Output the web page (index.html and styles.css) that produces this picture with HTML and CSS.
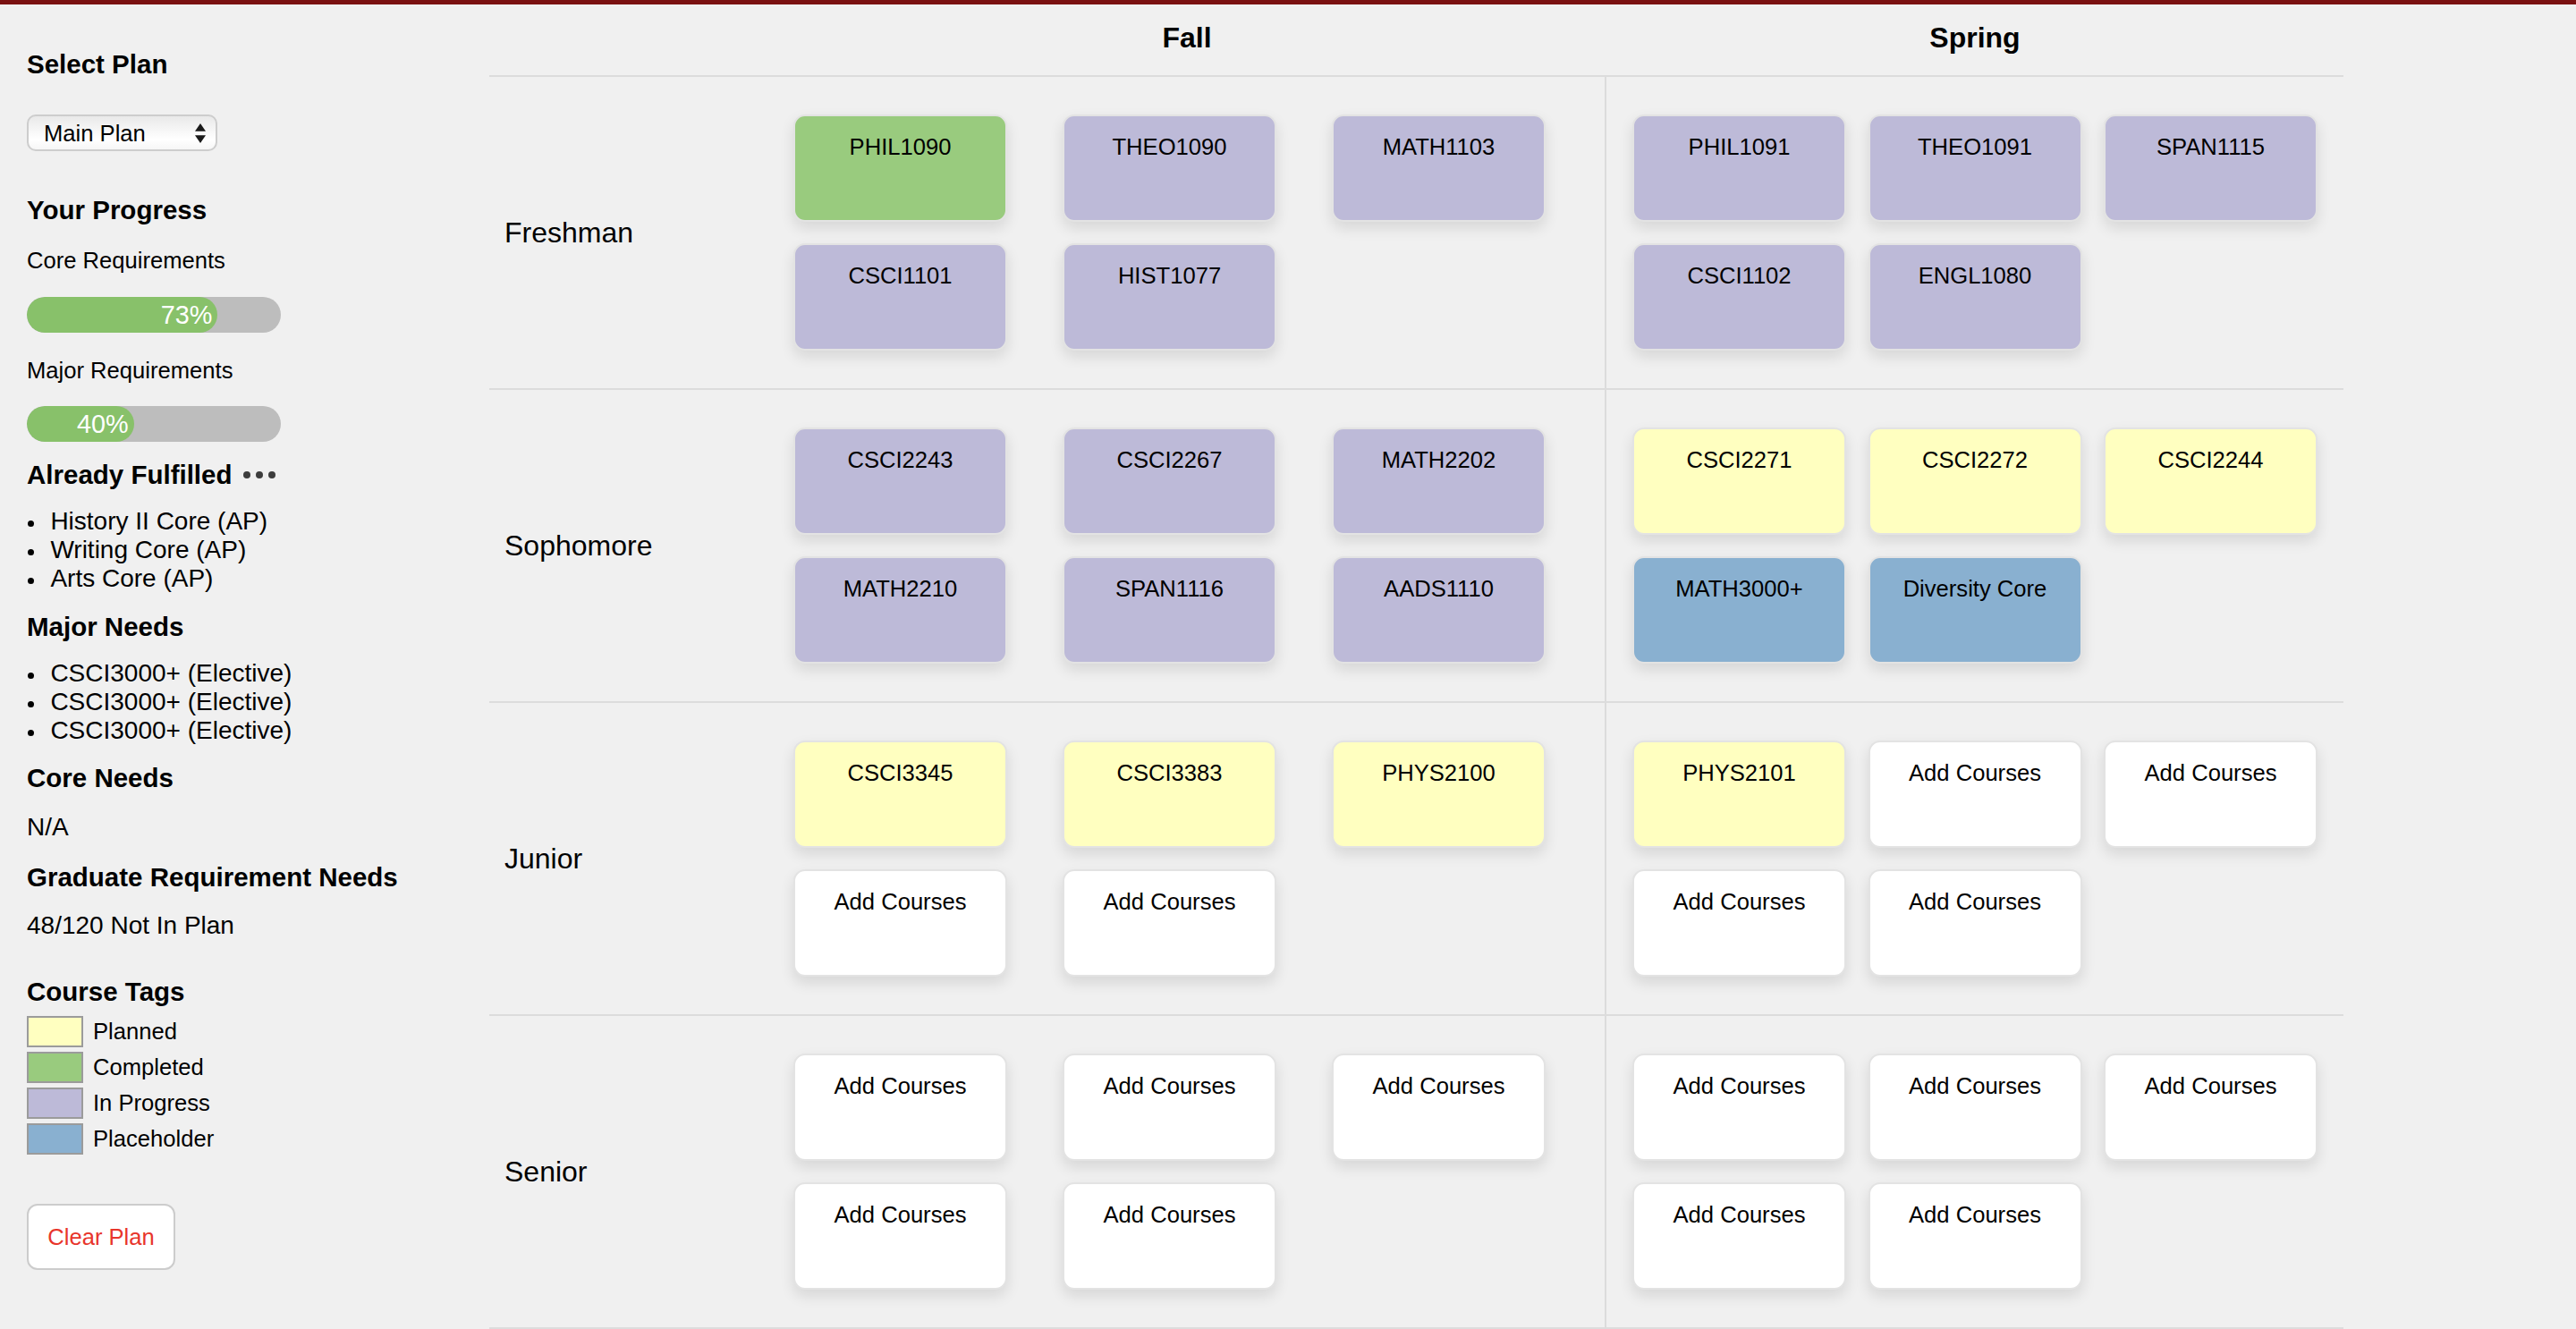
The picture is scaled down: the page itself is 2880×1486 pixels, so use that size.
FILE: index.html
```html
<!DOCTYPE html>
<html lang="en">
<head>
<meta charset="utf-8">
<title>Course Planner</title>
<link rel="stylesheet" href="styles.css">
</head>
<body>
<div class="topbar"></div>
<div class="layout">
  <aside class="sidebar">
    <h2 class="side-title first">Select Plan</h2>
    <div class="plan-select">
      <span>Main Plan</span>
      <svg class="select-arrows" width="12" height="22" viewBox="0 0 12 22"><polygon points="6,0 12,8.7 0,8.7" fill="#1a1a1a"/><polygon points="0,13.3 12,13.3 6,22" fill="#1a1a1a"/></svg>
    </div>

    <h2 class="side-title progress-title">Your Progress</h2>
    <p class="req-label core-label">Core Requirements</p>
    <div class="bar bar-core"><div class="bar-fill" style="width:73%">73%</div></div>
    <p class="req-label major-label">Major Requirements</p>
    <div class="bar bar-major"><div class="bar-fill" style="width:40%">40%</div></div>

    <h2 class="side-title fulfilled-title">Already Fulfilled <span class="dots"><i></i><i></i><i></i></span></h2>
    <ul class="side-list">
      <li>History II Core (AP)</li>
      <li>Writing Core (AP)</li>
      <li>Arts Core (AP)</li>
    </ul>

    <h2 class="side-title needs-title">Major Needs</h2>
    <ul class="side-list">
      <li>CSCI3000+ (Elective)</li>
      <li>CSCI3000+ (Elective)</li>
      <li>CSCI3000+ (Elective)</li>
    </ul>

    <h2 class="side-title core-needs-title">Core Needs</h2>
    <p class="side-text na-text">N/A</p>

    <h2 class="side-title grad-title">Graduate Requirement Needs</h2>
    <p class="side-text grad-text">48/120 Not In Plan</p>

    <h2 class="side-title tags-title">Course Tags</h2>
    <div class="legend">
      <div class="legend-row"><span class="swatch planned"></span>Planned</div>
      <div class="legend-row"><span class="swatch completed"></span>Completed</div>
      <div class="legend-row"><span class="swatch in-progress"></span>In Progress</div>
      <div class="legend-row"><span class="swatch placeholder"></span>Placeholder</div>
    </div>

    <button class="clear-btn">Clear Plan</button>
  </aside>

  <main class="planner">
    <div class="head-cell"></div>
    <div class="head-cell term">Fall</div>
    <div class="head-cell term">Spring</div>

    <div class="year-cell">Freshman</div>
    <div class="term-cell fall">
      <div class="card completed">PHIL1090</div>
      <div class="card in-progress">THEO1090</div>
      <div class="card in-progress">MATH1103</div>
      <div class="card in-progress">CSCI1101</div>
      <div class="card in-progress">HIST1077</div>
    </div>
    <div class="term-cell spring">
      <div class="card in-progress">PHIL1091</div>
      <div class="card in-progress">THEO1091</div>
      <div class="card in-progress">SPAN1115</div>
      <div class="card in-progress">CSCI1102</div>
      <div class="card in-progress">ENGL1080</div>
    </div>

    <div class="year-cell">Sophomore</div>
    <div class="term-cell fall">
      <div class="card in-progress">CSCI2243</div>
      <div class="card in-progress">CSCI2267</div>
      <div class="card in-progress">MATH2202</div>
      <div class="card in-progress">MATH2210</div>
      <div class="card in-progress">SPAN1116</div>
      <div class="card in-progress">AADS1110</div>
    </div>
    <div class="term-cell spring">
      <div class="card planned">CSCI2271</div>
      <div class="card planned">CSCI2272</div>
      <div class="card planned">CSCI2244</div>
      <div class="card placeholder">MATH3000+</div>
      <div class="card placeholder">Diversity Core</div>
    </div>

    <div class="year-cell">Junior</div>
    <div class="term-cell fall">
      <div class="card planned">CSCI3345</div>
      <div class="card planned">CSCI3383</div>
      <div class="card planned">PHYS2100</div>
      <div class="card empty">Add Courses</div>
      <div class="card empty">Add Courses</div>
    </div>
    <div class="term-cell spring">
      <div class="card planned">PHYS2101</div>
      <div class="card empty">Add Courses</div>
      <div class="card empty">Add Courses</div>
      <div class="card empty">Add Courses</div>
      <div class="card empty">Add Courses</div>
    </div>

    <div class="year-cell">Senior</div>
    <div class="term-cell fall">
      <div class="card empty">Add Courses</div>
      <div class="card empty">Add Courses</div>
      <div class="card empty">Add Courses</div>
      <div class="card empty">Add Courses</div>
      <div class="card empty">Add Courses</div>
    </div>
    <div class="term-cell spring">
      <div class="card empty">Add Courses</div>
      <div class="card empty">Add Courses</div>
      <div class="card empty">Add Courses</div>
      <div class="card empty">Add Courses</div>
      <div class="card empty">Add Courses</div>
    </div>
  </main>
</div>
</body>
</html>
```

FILE: styles.css
```css
* { box-sizing: border-box; }

html, body {
  margin: 0;
  padding: 0;
}

body {
  background: #f0f0f0;
  font-family: "Liberation Sans", Arial, Helvetica, sans-serif;
  color: #000;
  width: 2880px;
  height: 1486px;
  overflow: hidden;
}

.topbar {
  height: 5px;
  background: #7a1111;
}

.layout {
  display: flex;
  align-items: flex-start;
}

/* ---------- Sidebar ---------- */
.sidebar {
  width: 547px;
  flex: none;
  padding-left: 30px;
  padding-top: 50px;
}

.side-title {
  margin: 0;
  font-size: 29.5px;
  font-weight: bold;
  line-height: 34px;
}

.progress-title { margin-top: 49px; }
.fulfilled-title {
  margin-top: 20px;
  display: flex;
  align-items: center;
}
.needs-title { margin-top: 21px; }
.core-needs-title { margin-top: 20px; }
.grad-title { margin-top: 23px; }
.tags-title { margin-top: 41px; }

.dots {
  display: inline-flex;
  gap: 6.3px;
  margin-left: 12px;
}
.dots i {
  display: block;
  width: 8px;
  height: 8px;
  border-radius: 50%;
  background: #3d3d3d;
}

.plan-select {
  margin-top: 39px;
  width: 213px;
  height: 41px;
  border: 2px solid #cdcdcd;
  border-radius: 10px;
  background: linear-gradient(to bottom, #e9e9e9 0%, #f4f4f4 35%, #ffffff 70%, #f6f6f6 100%);
  display: flex;
  align-items: center;
  justify-content: space-between;
  padding: 0 11px 0 17px;
  font-size: 25.6px;
}
.plan-select span { line-height: 30px; padding-top: 1px; }
.select-arrows { display: block; }

.req-label {
  margin: 0;
  font-size: 25.6px;
  line-height: 30px;
}
.core-label { margin-top: 24px; }
.major-label { margin-top: 27px; }

.bar {
  width: 284px;
  height: 40px;
  border-radius: 20px;
  background: #bdbdbd;
  overflow: hidden;
}
.bar-core { margin-top: 26px; }
.bar-major { margin-top: 25px; }

.bar-fill {
  box-sizing: content-box;
  height: 40px;
  padding-right: 6px;
  border-radius: 20px;
  background: #88c16a;
  color: #fff;
  font-size: 28.8px;
  line-height: 40px;
  text-align: right;
}

.side-list {
  list-style: none;
  margin: 19px 0 0 0;
  padding: 0;
}
.side-list li {
  display: flex;
  align-items: center;
  font-size: 28px;
  line-height: 32px;
}
.side-list li::before {
  content: "";
  width: 7px;
  height: 7px;
  border-radius: 50%;
  background: #000;
  margin: 4px 18.4px 0 1px;
  flex: none;
}

.side-text {
  margin: 0;
  font-size: 28px;
  line-height: 32px;
}
.na-text { margin-top: 22px; }
.grad-text { margin-top: 21px; }

.legend {
  margin-top: 9.5px;
  display: flex;
  flex-direction: column;
  gap: 5px;
}
.legend-row {
  display: flex;
  align-items: center;
  gap: 11px;
  font-size: 25.6px;
  height: 35px;
}
.swatch {
  width: 63px;
  height: 35px;
  border: 2px solid #9b9b9b;
  flex: none;
}

.swatch.planned, .card.planned { background: #ffffc0; }
.swatch.completed, .card.completed { background: #99cb7e; }
.swatch.in-progress, .card.in-progress { background: #bdbad8; }
.swatch.placeholder, .card.placeholder { background: #89b0d0; }

.clear-btn {
  display: block;
  margin-top: 55.5px;
  width: 166px;
  height: 74px;
  border: 2px solid #cccccc;
  border-radius: 12px;
  background: #fff;
  color: #e8352b;
  font-family: "Liberation Sans", Arial, sans-serif;
  font-size: 25.6px;
  padding: 0;
}

/* ---------- Planner ---------- */
.planner {
  display: grid;
  grid-template-columns: 311px 938px 824px;
  grid-template-rows: 81px repeat(4, 350px);
}

.head-cell {
  border-bottom: 2px solid #dcdcdc;
  padding-top: 19px;
}
.head-cell.term {
  text-align: center;
  font-size: 32px;
  font-weight: bold;
  line-height: 37px;
}

.year-cell {
  border-bottom: 2px solid #dcdcdc;
  display: flex;
  align-items: center;
  padding-left: 17px;
  font-size: 32px;
}

.term-cell {
  border-bottom: 2px solid #dcdcdc;
  padding: 42px 0 0 29px;
  display: grid;
  grid-template-columns: repeat(3, 239px);
  grid-auto-rows: 120px;
  row-gap: 24px;
  align-content: start;
}
.term-cell.fall {
  column-gap: 62px;
  border-right: 2px solid #dcdcdc;
}
.term-cell.spring {
  column-gap: 24.5px;
}

.card {
  height: 120px;
  border: 2px solid #e3e3e3;
  border-radius: 13px;
  box-shadow: 0 7px 16px rgba(0, 0, 0, 0.11);
  padding-top: 20px;
  text-align: center;
  font-size: 25.6px;
  line-height: normal;
}
.card.empty { background: #fff; }
```
